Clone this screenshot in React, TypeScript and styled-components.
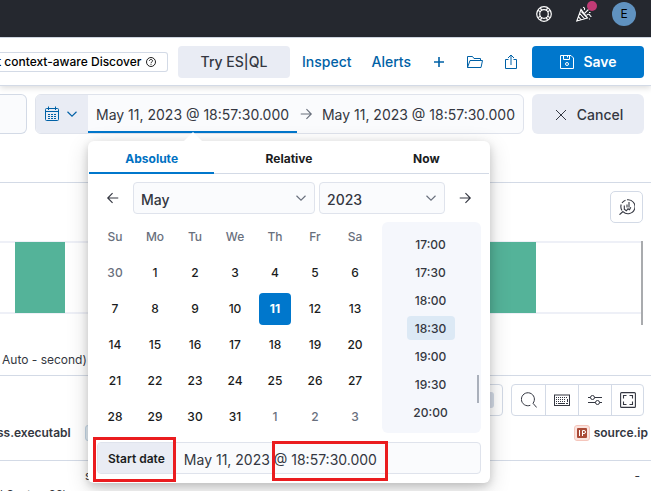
import React from "react";
import styled, { createGlobalStyle, css } from "styled-components";

const color = {
  text: "#343741",
  title: "#1a1c21",
  subdued: "#69707d",
  border: "#d3dae6",
  link: "#0061a6",
  primary: "#0077cc",
  shade: "#e9ecf4",
  field: "#fafbfd",
  bar: "#54b399",
  mark: "#ea1c1f",
};

const GlobalStyle = createGlobalStyle`
  *, *::before, *::after { box-sizing: border-box; }
  html, body { margin: 0; }
  html { overflow: hidden; }
  body {
    background: #fff;
    color: ${color.text};
    font-family: Inter, "Liberation Sans", sans-serif;
    font-size: 14px;
    line-height: 20px;
  }
  button, input, select { font: inherit; color: inherit; margin: 0; padding: 0; border: 0; background: none; }
  button { cursor: pointer; white-space: nowrap; }
`;

const Page = styled.div`
  height: 100vh;
  display: flex;
  flex-direction: column;
  overflow: hidden;
`;

const TopBar = styled.header`
  height: 38px;
  flex: none;
  background: #25282f;
  border-bottom: 1px solid ${color.border};
  color: #fff;
  display: flex;
  align-items: center;
  justify-content: flex-end;
  padding: 0 15px 9px;
  gap: 24px;
`;

const HeaderButton = styled.button`
  position: relative;
  display: flex;
  color: #fff;
`;

const Dot = styled.span`
  position: absolute;
  top: -5px;
  right: -5px;
  width: 10px;
  height: 10px;
  border-radius: 50%;
  background: #c03b75;
`;

const Avatar = styled.button`
  width: 24px;
  height: 24px;
  margin-left: -4px;
  border-radius: 50%;
  background: #6092c0;
  color: #000;
  font-size: 12px;
`;

const Toolbar = styled.nav`
  position: relative;
  height: 48px;
  flex: none;
  background: #fff;
  border-bottom: 1px solid ${color.border};
  box-shadow: 0 2px 6px rgba(0, 0, 0, 0.14);
  display: flex;
  align-items: center;
  justify-content: space-between;
  padding-right: 7px;
`;

const ProfileBadge = styled.span`
  height: 20px;
  display: flex;
  align-items: center;
  gap: 5px;
  margin-left: -3px;
  padding-right: 11px;
  border: 1px solid ${color.border};
  border-left: 0;
  border-radius: 0 3px 3px 0;
  color: #000;
  font-size: 12px;
  font-weight: 500;
  white-space: nowrap;
`;

const Actions = styled.div`
  display: flex;
  align-items: center;
`;

const Button = styled.button<{ $primary?: boolean }>`
  height: 32px;
  width: 112px;
  display: flex;
  align-items: center;
  justify-content: center;
  gap: 8px;
  border-radius: 4px;
  background: ${(p) => (p.$primary ? color.primary : color.shade)};
  color: ${(p) => (p.$primary ? "#fff" : color.text)};
  font-weight: ${(p) => (p.$primary ? 600 : 500)};
`;

const LinkButton = styled.button`
  display: flex;
  color: ${color.link};
  font-weight: 500;
`;

const LinkGroup = styled.div`
  display: flex;
  align-items: center;
  gap: 20px;
  padding: 0 13px 0 12px;
`;

const QueryBar = styled.div`
  height: 96px;
  flex: none;
  display: flex;
  align-items: flex-start;
  gap: 8px;
  padding: 8px 7px 0 0;
`;

const QueryEnd = styled.div`
  width: 27px;
  height: 40px;
  border: 1px solid ${color.border};
  border-left: 0;
  border-radius: 0 6px 6px 0;
  background: ${color.field};
`;

const DatePicker = styled.div`
  position: relative;
  z-index: 2;
  flex: 1;
  height: 40px;
  display: flex;
  align-items: stretch;
  border: 1px solid #dfe3ec;
  border-radius: 6px;
  background: ${color.field};
`;

const QuickSelect = styled.button`
  width: 52px;
  display: flex;
  align-items: center;
  justify-content: center;
  gap: 6px;
  padding-right: 2px;
  border-radius: 5px 0 0 5px;
  background: ${color.shade};
  color: ${color.link};
`;

const DateButton = styled.button<{ $active?: boolean }>`
  position: relative;
  padding: 2px 8px 0;
  white-space: nowrap;
  ${(p) =>
    p.$active &&
    css`
      &::after {
        content: "";
        position: absolute;
        left: 0;
        right: 0;
        bottom: 0;
        height: 2px;
        background: ${color.primary};
      }
    `}
`;

const DateArrow = styled.span`
  flex: 1;
  display: flex;
  align-items: center;
  justify-content: center;
  color: ${color.subdued};
`;

const CancelButton = styled(Button)`
  height: 40px;
  padding-top: 2px;
  border-radius: 6px;
`;

const Popover = styled.section`
  position: absolute;
  top: 46px;
  left: 52px;
  width: 402px;
  padding: 0 1px 9px;
  background: #fff;
  border-radius: 6px;
  box-shadow: 0 3px 8px rgba(0, 0, 0, 0.16), 0 6px 22px rgba(0, 0, 0, 0.16);
  &::before {
    content: "";
    position: absolute;
    top: -9px;
    left: 95px;
    border: 10px solid transparent;
    border-top: 0;
    border-bottom-color: #fff;
  }
`;

const Tabs = styled.div`
  display: flex;
  gap: 12px;
  border-bottom: 1px solid ${color.border};
`;

const Tab = styled.button<{ $selected?: boolean }>`
  flex: 1;
  height: 33px;
  margin-bottom: -1px;
  padding-top: 4px;
  border-bottom: 2px solid ${(p) => (p.$selected ? color.primary : "transparent")};
  color: ${(p) => (p.$selected ? "#0071c2" : color.title)};
  font-size: 12px;
  font-weight: 700;
`;

const MonthBar = styled.div`
  display: grid;
  grid-template-columns: 32px 13fr 9fr 32px;
  gap: 4px;
  padding: 8px 8px 5px;
`;

const StepButton = styled.button`
  display: flex;
  align-items: center;
  justify-content: center;
`;

const SelectBox = styled.div`
  display: grid;
  align-items: center;
  border: 1px solid #dfe3ec;
  border-radius: 4px;
  background: ${color.field};
  height: 32px;
  > * { grid-area: 1 / 1; }
  > svg { justify-self: end; margin-right: 7px; color: ${color.subdued}; pointer-events: none; }
`;

const Select = styled.select`
  appearance: none;
  width: 100%;
  height: 30px;
  padding: 3px 28px 0 7px;
  font-weight: 500;
`;

const PickerBody = styled.div`
  display: flex;
  justify-content: space-between;
  padding: 0 8px 7px 6px;
`;

const Calendar = styled.table`
  border-collapse: collapse;
  table-layout: fixed;
  width: 280px;
  font-size: 12px;
  text-align: center;
  th, td { height: 36px; padding: 0; }
  th { font-weight: 500; color: ${color.subdued}; }
`;

const Day = styled.button<{ $outside?: boolean; $selected?: boolean }>`
  width: 32px;
  height: 32px;
  border-radius: 4px;
  font-weight: ${(p) => (p.$selected ? 700 : 500)};
  color: ${(p) => (p.$selected ? "#fff" : p.$outside ? color.subdued : color.title)};
  background: ${(p) => (p.$selected ? color.primary : "none")};
`;

const Times = styled.div`
  display: flex;
  width: 99px;
  height: 211px;
  margin-top: 3px;
  padding-top: 8px;
  border-radius: 6px;
  background: #f5f7fc;
`;

const TimeList = styled.ul`
  flex: 1;
  margin: 0;
  padding: 0 0 0 2px;
  list-style: none;
  li { height: 28px; padding: 2px 0; display: flex; justify-content: center; }
`;

const TimeButton = styled.button<{ $selected?: boolean }>`
  width: 48px;
  height: 24px;
  padding-top: 2px;
  border-radius: 4px;
  font-size: 12px;
  font-weight: 500;
  background: ${(p) => (p.$selected ? "#dce9f5" : "none")};
`;

const TimeThumb = styled.span`
  width: 2px;
  height: 28px;
  align-self: flex-end;
  margin: 0 2px 30px 0;
  background: #aab0bb;
`;

const StartRow = styled.div`
  position: relative;
  display: flex;
  height: 32px;
  margin: 0 8px;
  border: 1px solid #dfe3ec;
  border-radius: 4px;
  background: ${color.field};
`;

const StartLabel = styled.label`
  display: flex;
  align-items: center;
  padding: 2px 8px 0 10px;
  border-radius: 3px 0 0 3px;
  background: ${color.shade};
  color: ${color.title};
  font-size: 12px;
  font-weight: 600;
  white-space: nowrap;
`;

const StartInput = styled.input`
  flex: 1;
  min-width: 0;
  padding: 3px 11px 0;
`;

const Mark = styled.span<{ $left: number; $width: number; $top: number; $height: number }>`
  position: absolute;
  left: ${(p) => p.$left}px;
  width: ${(p) => p.$width}px;
  top: ${(p) => p.$top}px;
  height: ${(p) => p.$height}px;
  border: 3px solid ${color.mark};
  pointer-events: none;
`;

const ChartPanel = styled.section`
  flex: none;
  border-top: 1px solid ${color.border};
  border-bottom: 1px solid ${color.border};
  padding: 8px 8px 0 0;
  display: flex;
  flex-direction: column;
  height: 194px;
`;

const SquareButton = styled.button`
  align-self: flex-end;
  width: 33px;
  height: 32px;
  display: flex;
  align-items: center;
  justify-content: center;
  border: 1px solid ${color.border};
  border-radius: 5px;
`;

const ChartRow = styled.div`
  display: flex;
  margin-top: 18px;
  height: 84px;
`;

const Plot = styled.div`
  flex: 1;
  height: 73px;
  display: flex;
  justify-content: space-between;
  padding: 0 105px 0 15px;
  background: linear-gradient(#eef0f7, #eef0f7) 0 0 / 100% 2px no-repeat,
    linear-gradient(#eef0f7, #eef0f7) 0 100% / 100% 2px no-repeat;
`;

const Bar = styled.span`
  width: 50px;
  height: 71px;
  margin-top: 1px;
  background: ${color.bar};
`;

const ChartThumb = styled.span`
  width: 2px;
  background: #a9abae;
`;

const ChartCaption = styled.p`
  margin: 25px 0 0 2px;
  font-size: 12px;
`;

const GridTools = styled.div`
  display: flex;
  justify-content: flex-end;
  gap: 8px;
  padding: 8px 7px 0 0;
  flex: none;
`;

const ToolGroup = styled.div`
  display: flex;
  height: 32px;
  border: 1px solid ${color.border};
  border-radius: 4px;
`;

const ToolButton = styled.button`
  width: 33px;
  display: flex;
  align-items: center;
  justify-content: center;
  & + & { border-left: 1px solid ${color.border}; }
  &:last-child { width: 32px; }
`;

const SortButton = styled.button`
  width: 96px;
  display: flex;
  align-items: center;
  justify-content: flex-end;
  padding-right: 8px;
`;

const SortCount = styled.span`
  width: 20px;
  height: 16px;
  border-radius: 3px;
  background: ${color.border};
`;

const DocTable = styled.table`
  width: 100%;
  border-collapse: collapse;
  font-size: 12px;
  line-height: 16px;
  text-align: left;
  th { height: 44px; padding: 9px 0 0; border-bottom: 1px solid ${color.border}; font-weight: 600; vertical-align: top; }
  td { height: 25px; padding: 7px 0 0; vertical-align: top; }
`;

const FirstColumn = styled.th`
  width: 85px;
`;

const LastColumn = styled.th`
  width: 80px;
`;

const FieldName = styled.span`
  display: block;
  margin-left: -3px;
  white-space: nowrap;
`;

const IpHeading = styled.span`
  display: flex;
  align-items: center;
  justify-content: flex-end;
  gap: 4px;
  padding-right: 3px;
  white-space: nowrap;
`;

const StringToken = styled.span`
  display: block;
  width: 16px;
  height: 16px;
  border: 1px solid #c4d6e6;
  border-radius: 3px;
  background: #e4eef6;
`;

const IpToken = styled.span`
  display: flex;
  align-items: center;
  justify-content: center;
  width: 16px;
  height: 16px;
  border: 1px solid #f5c6bc;
  border-radius: 3px;
  background: #fbe4df;
`;

const PathCell = styled.td`
  && { padding-top: 2px; white-space: nowrap; }
`;

const DashCell = styled.td`
  && { text-align: right; padding-right: 11px; }
`;

type IconProps = { size?: number; width?: number; children: React.ReactNode };
const Icon = ({ size = 16, width = 1, children }: IconProps) => (
  <svg width={size} height={size} viewBox="0 0 16 16" fill="none" stroke="currentColor" strokeWidth={width} aria-hidden="true">
    {children}
  </svg>
);

const HelpIcon = () => (
  <Icon width={1.2}>
    <circle cx="8" cy="8" r="7.3" />
    <circle cx="8" cy="8" r="4.3" />
    <path d="M2.100 4.500 4.600 5.800M4.500 2.100 5.800 4.600M11.500 2.100 10.200 4.600M13.900 4.500 11.400 5.800M13.900 11.500 11.400 10.200M11.500 13.900 10.200 11.400M4.500 13.900 5.800 11.400M2.100 11.500 4.600 10.200" />
  </Icon>
);

const CheerIcon = () => (
  <Icon width={1.1}>
    <path d="M5 3.500 .8 15 11.500 12ZM5.400 5.500 11 11.500M3.800 7.500 8.300 12.600M2.600 10.800 5 13.500" />
    <path d="M7 1.200c1.500.3 2 1.500 1.300 2.800M8.500 7.300 12.500 3.500M10.500 9.500c1-1.500 2.600-1.700 3.300-.6.500 1 .6 1.800 1.700 1.600M13 6.500h1.500M13.500 12.500v1" />
  </Icon>
);

const QuestionIcon = () => (
  <Icon size={10} width={1.400}>
    <circle cx="8" cy="8" r="7.200" />
    <path d="M5.500 6.300C5.500 4.800 6.600 4 8 4s2.500.9 2.500 2.200C10.500 7.800 8 8 8 9.800M8 11v1.500" />
  </Icon>
);

const PlusIcon = () => (
  <Icon width={1.600}>
    <path d="M8 3v10M3 8h10" />
  </Icon>
);

const FolderIcon = () => (
  <Icon>
    <path d="M.5 13.500v-11h5l1.500 2h6.500v2M.5 13.500 3 6.500h12.500l-1.500 7Z" />
  </Icon>
);

const ShareIcon = () => (
  <Icon>
    <path d="M5.500 5.500h-3v9h11v-9h-3M8 11V1.200M5 4l3-3 3 3" />
  </Icon>
);

const SaveIcon = () => (
  <Icon>
    <path d="M1.500 1.500h10.500l2.500 2.500v10.500h-13ZM4.500 1.500v4h6v-4M8.500 1.500v2" />
    <circle cx="8" cy="10" r="1.500" />
  </Icon>
);

const CalendarIcon = () => (
  <Icon>
    <rect x="1.500" y="2.500" width="13" height="12" rx="1" />
    <path d="M4.500.5v3.500M11.500.5v3.500M1.500 5.500h13" />
    <path d="M4 8.500h8.500M4 10.500h8.500M4 12.500h8.500" strokeDasharray="2 1" />
  </Icon>
);

const ChevronIcon = () => (
  <Icon size={12} width={1.500}>
    <path d="m2 5 6 6 6-6" />
  </Icon>
);

const RightIcon = () => (
  <Icon size={14} width={1.3}>
    <path d="M2 8h12M8.500 2.500 14 8 8.500 13.500" />
  </Icon>
);

const LeftIcon = () => (
  <Icon size={14} width={1.3}>
    <path d="M14 8H2M7.500 2.500 2 8 7.500 13.500" />
  </Icon>
);

const CrossIcon = () => (
  <Icon>
    <path d="m3 3 10 10M13 3 3 13" />
  </Icon>
);

const LensIcon = () => (
  <Icon width={1.1}>
    <path d="M3 11.500A7 7 0 0 1 2.200 5.500M3 4A7 7 0 0 1 6.500 1.200M8 .8a7 7 0 1 1-4 11.800M.5 15.700 4 12.500" />
    <path d="M5.300 6.500v3.800l2 1.500 1.700-2 1.500 1 1.300-2.500M8 5.500v3M10 3v5.500" />
  </Icon>
);

const SearchIcon = () => (
  <Icon>
    <path d="M9.300 13.300A6.500 6.500 0 1 1 12 11.300L15.700 15.500" />
  </Icon>
);

const KeyboardIcon = () => (
  <Icon>
    <rect x=".5" y="3" width="15" height="10.500" />
    <path d="M2 5.500h12M2 7.500h10M2 9.500h10" strokeDasharray="1 1" />
    <path d="M2 11.500h1M4 11.500h7M12 11.500h2M13.500 7v3" />
  </Icon>
);

const ControlsIcon = () => (
  <Icon>
    <path d="M1 5.500h2.500M7.500 5.500H15M1 10.500h7.500M12.500 10.500H15" />
    <circle cx="5.500" cy="5.500" r="2" />
    <circle cx="10.500" cy="10.500" r="2" />
  </Icon>
);

const FullScreenIcon = () => (
  <Icon width={1.1}>
    <rect x=".6" y=".6" width="14.800" height="14.800" rx="1" />
    <path d="M3.500 6.500v-3h3M9.500 3.500h3v3M12.500 9.500v3h-3M6.500 12.500h-3v-3" />
  </Icon>
);

const IpIcon = () => (
  <svg width="10" height="10" viewBox="0 0 10 10" aria-hidden="true">
    <rect width="10" height="10" rx="1" fill="#aa4a36" />
    <path d="M2.500 2v6M5.500 8V2.500h1.500a1.500 1.500 0 0 1 0 3H5.500" fill="none" stroke="#fff" />
  </svg>
);

const weekdays = ["Su", "Mo", "Tu", "We", "Th", "Fr", "Sa"];
const days = [30, ...Array.from({ length: 31 }, (_, i) => i + 1), 1, 2, 3];
const weeks = Array.from({ length: 5 }, (_, w) => days.slice(w * 7, w * 7 + 7));
const times = ["17:00", "17:30", "18:00", "18:30", "19:00", "19:30", "20:00"];
const date = "May 11, 2023 @ 18:57:30.000";

const DatePopover = () => (
  <Popover aria-label="Start date">
    <Tabs role="tablist">
      <Tab role="tab" aria-selected $selected>Absolute</Tab>
      <Tab role="tab">Relative</Tab>
      <Tab role="tab">Now</Tab>
    </Tabs>
    <MonthBar>
      <StepButton aria-label="Previous month"><LeftIcon /></StepButton>
      <SelectBox>
        <Select aria-label="Month" defaultValue="May"><option>May</option></Select>
        <ChevronIcon />
      </SelectBox>
      <SelectBox>
        <Select aria-label="Year" defaultValue="2023"><option>2023</option></Select>
        <ChevronIcon />
      </SelectBox>
      <StepButton aria-label="Next month"><RightIcon /></StepButton>
    </MonthBar>
    <PickerBody>
      <Calendar>
        <thead>
          <tr>{weekdays.map((d) => <th key={d} scope="col">{d}</th>)}</tr>
        </thead>
        <tbody>
          {weeks.map((week, w) => (
            <tr key={w}>
              {week.map((d, i) => {
                const index = w * 7 + i;
                return (
                  <td key={i}>
                    <Day $outside={index < 1 || index > 31} $selected={index === 11}>{d}</Day>
                  </td>
                );
              })}
            </tr>
          ))}
        </tbody>
      </Calendar>
      <Times>
        <TimeList>
          {times.map((t) => (
            <li key={t}><TimeButton $selected={t === "18:30"}>{t}</TimeButton></li>
          ))}
        </TimeList>
        <TimeThumb />
      </Times>
    </PickerBody>
    <StartRow>
      <StartLabel htmlFor="start-date">Start date</StartLabel>
      <StartInput id="start-date" defaultValue={date} />
      <Mark $left={-5} $width={83} $top={-6} $height={45} />
      <Mark $left={174} $width={116} $top={-2} $height={40} />
    </StartRow>
  </Popover>
);

export default function App() {
  return (
    <Page>
      <GlobalStyle />
      <TopBar>
        <HeaderButton aria-label="Help"><HelpIcon /></HeaderButton>
        <HeaderButton aria-label="What's new"><CheerIcon /><Dot /></HeaderButton>
        <Avatar>E</Avatar>
      </TopBar>
      <Toolbar>
        <ProfileBadge>t context-aware Discover <QuestionIcon /></ProfileBadge>
        <Actions>
          <Button>Try ES|QL</Button>
          <LinkGroup>
            <LinkButton>Inspect</LinkButton>
            <LinkButton>Alerts</LinkButton>
            <LinkButton aria-label="New"><PlusIcon /></LinkButton>
            <LinkButton aria-label="Open"><FolderIcon /></LinkButton>
            <LinkButton aria-label="Share"><ShareIcon /></LinkButton>
          </LinkGroup>
          <Button $primary><SaveIcon />Save</Button>
        </Actions>
      </Toolbar>
      <QueryBar>
        <QueryEnd />
        <DatePicker>
          <QuickSelect aria-label="Quick select"><CalendarIcon /><ChevronIcon /></QuickSelect>
          <DateButton $active>{date}</DateButton>
          <DateArrow><RightIcon /></DateArrow>
          <DateButton>{date}</DateButton>
          <DatePopover />
        </DatePicker>
        <CancelButton><CrossIcon />Cancel</CancelButton>
      </QueryBar>
      <ChartPanel>
        <SquareButton aria-label="Edit visualization"><LensIcon /></SquareButton>
        <ChartRow>
          <Plot><Bar /><Bar /></Plot>
          <ChartThumb />
        </ChartRow>
        <ChartCaption>Auto - second)</ChartCaption>
      </ChartPanel>
      <GridTools>
        <ToolGroup>
          <SortButton aria-label="Sort fields"><SortCount /></SortButton>
        </ToolGroup>
        <ToolGroup>
          <ToolButton aria-label="Search"><SearchIcon /></ToolButton>
          <ToolButton aria-label="Keyboard shortcuts"><KeyboardIcon /></ToolButton>
          <ToolButton aria-label="Display options"><ControlsIcon /></ToolButton>
          <ToolButton aria-label="Full screen"><FullScreenIcon /></ToolButton>
        </ToolGroup>
      </GridTools>
      <DocTable>
        <thead>
          <tr>
            <FirstColumn scope="col"><FieldName>ss.executabl</FieldName></FirstColumn>
            <th scope="col"><StringToken /></th>
            <LastColumn scope="col"><IpHeading><IpToken><IpIcon /></IpToken>source.ip</IpHeading></LastColumn>
          </tr>
        </thead>
        <tbody>
          <tr>
            <td />
            <td>s</td>
            <DashCell>-</DashCell>
          </tr>
          <tr>
            <PathCell>l System32\</PathCell>
            <td />
            <td />
          </tr>
        </tbody>
      </DocTable>
    </Page>
  );
}
